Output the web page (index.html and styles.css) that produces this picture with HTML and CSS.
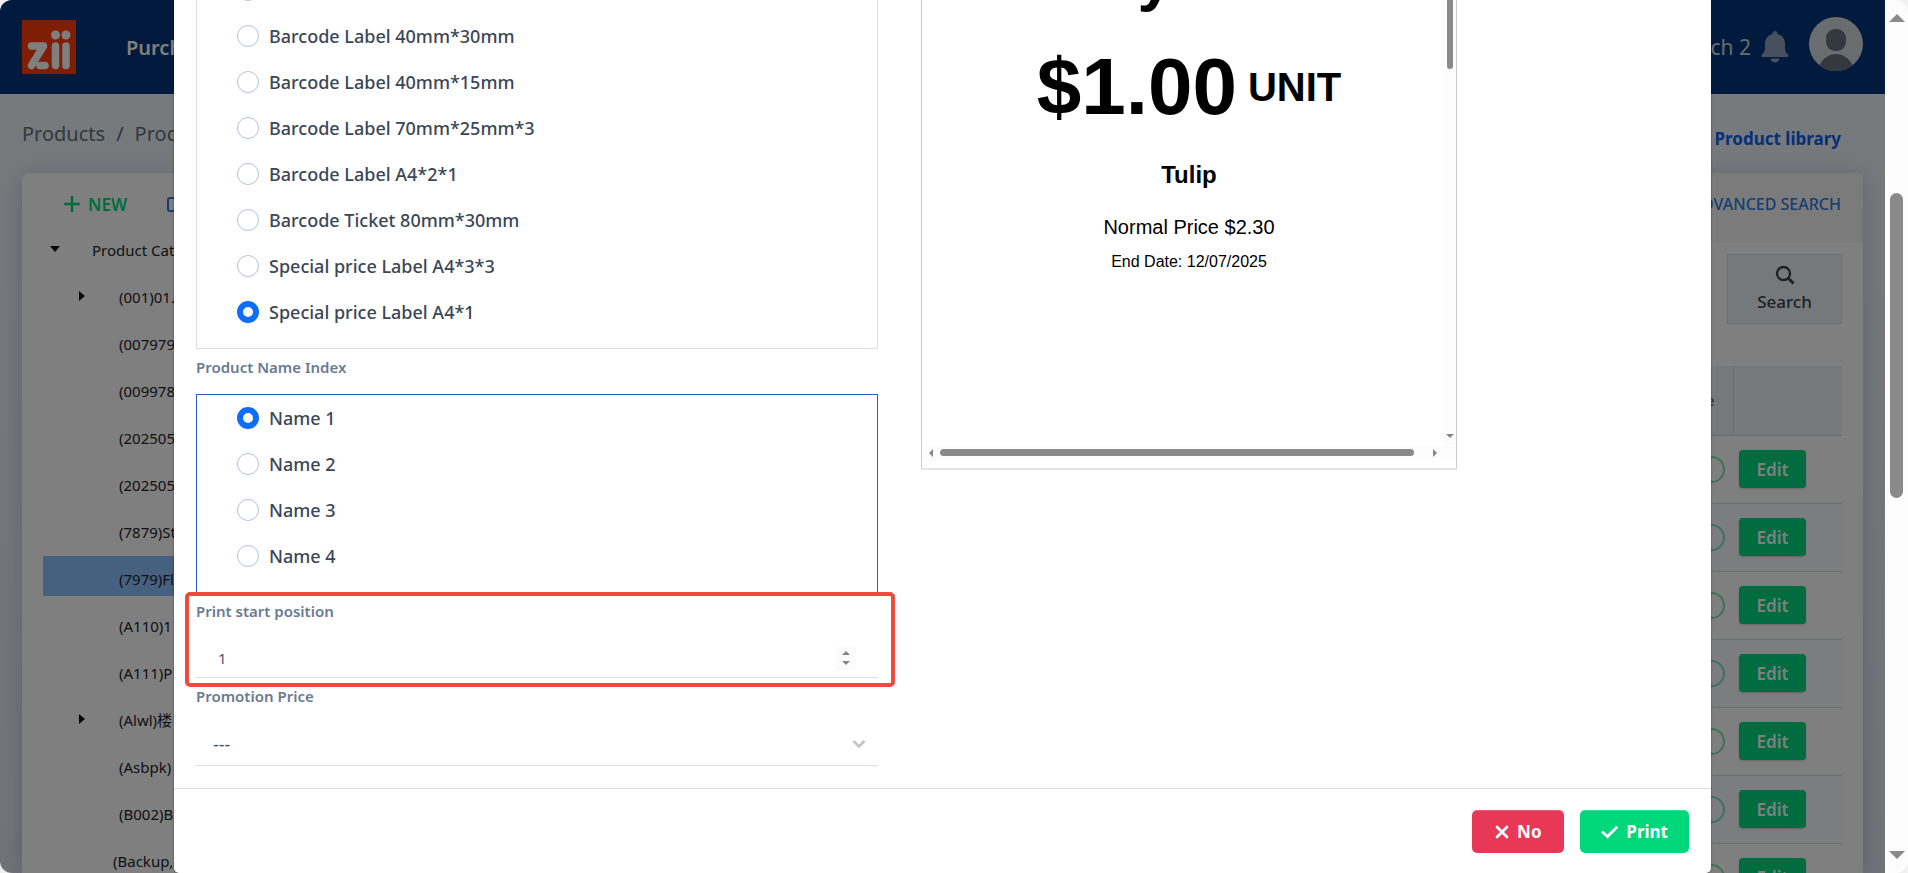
FILE: index.html
```html
<!DOCTYPE html>
<html lang="en">
<head>
  <meta charset="UTF-8" />
  <meta name="viewport" content="width=device-width, initial-scale=1.0" />
  <title>Products</title>
  <link rel="stylesheet" href="styles.css">
</head>
<body>
<div class="window">
  <div class="page">

    <!-- Top bar -->
    <header class="topbar">
      <svg class="logo" viewBox="0 0 54 54" role="img" aria-label="zii">
        <rect width="54" height="54" fill="#ff3c04"/>
        <g fill="none" stroke="#fff" stroke-width="7.500" stroke-linecap="round" stroke-linejoin="round">
          <path d="M9.500 26H21.500L9.500 45.500"/>
          <path d="M18 45.500H23"/>
          <path d="M33.500 26V45.500"/>
          <path d="M44 26V45.500"/>
        </g>
        <circle cx="33.500" cy="15" r="4.500" fill="#fff"/>
        <circle cx="44" cy="15" r="4.500" fill="#fff"/>
      </svg>
      <nav class="topnav"><a href="#">Purchase</a></nav>
      <span class="branch">Branch 2</span>
      <svg class="bell" viewBox="0 0 28 32" aria-hidden="true">
        <path fill="#8fa0b8" d="M14 0a2.500 2.500 0 0 0-2.400 3C7 4 4 8 4 12.500V17c0 3-1 4.500-2.800 6.200C-.3 24.800.3 26 2 26h24c1.700 0 2.300-1.200.8-2.800C25 21.500 24 20 24 17v-4.500C24 8 21 4 16.400 3A2.500 2.500 0 0 0 14 0z"/>
        <path fill="#8fa0b8" d="M9.500 27.500h9a4.500 4 0 0 1-9 0z"/>
      </svg>
      <svg class="avatar" viewBox="0 0 54 54" aria-hidden="true">
        <circle cx="27" cy="27" r="27" fill="#d3dbdf"/>
        <rect x="17" y="12" width="20" height="22" rx="9" fill="#67727f"/>
        <path d="M10.500 48.500C14 41 20 37 27 37s13 4 16.500 11.500A27 27 0 0 1 10.500 48.500z" fill="#67727f"/>
      </svg>
    </header>

    <div class="subbar">
      <div class="breadcrumb"><a href="#">Products</a><span>/</span><a href="#">Product</a></div>
      <a class="library" href="#">Product library</a>
    </div>

    <main class="card">
      <section class="tree">
        <div class="tree-tools">
          <button class="tool-new" type="button">
            <svg viewBox="0 0 16 16" aria-hidden="true"><path d="M8 1v14M1 8h14" stroke="currentColor" stroke-width="2.400" stroke-linecap="round"/></svg>
            NEW
          </button>
          <button class="tool-edit" type="button" aria-label="Edit category">
            <svg viewBox="0 0 16 16" aria-hidden="true"><rect x="1" y="2" width="13" height="13" rx="2" fill="none" stroke="currentColor" stroke-width="2"/></svg>
          </button>
        </div>
        <ul class="tree-list">
          <li class="root open">Product Category</li>
          <li class="closed">(001)01.</li>
          <li>(007979)</li>
          <li>(009978)</li>
          <li>(202505)</li>
          <li>(202505)</li>
          <li>(7879)St</li>
          <li class="active">(7979)Fl</li>
          <li>(A110)1</li>
          <li>(A111)P</li>
          <li class="closed">(Alwl)楼</li>
          <li>(Asbpk)</li>
          <li>(B002)B</li>
          <li class="outer">(Backup,</li>
        </ul>
      </section>

      <section class="list">
        <div class="list-head"><a href="#">ADVANCED SEARCH</a></div>
        <div class="list-body">
          <button class="search" type="button">
            <svg viewBox="0 0 20 20" aria-hidden="true"><circle cx="8.500" cy="8.500" r="6.500" fill="none" stroke="currentColor" stroke-width="2.400"/><path d="M13.500 13.500L18.500 18.500" stroke="currentColor" stroke-width="3"/></svg>
            Search
          </button>
          <table class="grid">
            <thead>
              <tr><th>Enable</th><th class="actions"></th></tr>
            </thead>
            <tbody>
              <tr><td><span class="switch"></span></td><td><button class="edit" type="button">Edit</button></td></tr>
              <tr><td><span class="switch"></span></td><td><button class="edit" type="button">Edit</button></td></tr>
              <tr><td><span class="switch"></span></td><td><button class="edit" type="button">Edit</button></td></tr>
              <tr><td><span class="switch"></span></td><td><button class="edit" type="button">Edit</button></td></tr>
              <tr><td><span class="switch"></span></td><td><button class="edit" type="button">Edit</button></td></tr>
              <tr><td><span class="switch"></span></td><td><button class="edit" type="button">Edit</button></td></tr>
              <tr><td><span class="switch"></span></td><td><button class="edit" type="button">Edit</button></td></tr>
            </tbody>
          </table>
        </div>
      </section>
    </main>

    <!-- Print dialog -->
    <div class="backdrop">
      <form class="modal">
        <div class="modal-body">
          <div class="fields">
            <div class="options" role="radiogroup" aria-label="Label format">
              <label><input type="radio" name="format">Barcode Label</label>
              <label><input type="radio" name="format">Barcode Label 30mm*20mm</label>
              <label><input type="radio" name="format">Barcode Label 40mm*30mm</label>
              <label><input type="radio" name="format">Barcode Label 40mm*15mm</label>
              <label><input type="radio" name="format">Barcode Label 70mm*25mm*3</label>
              <label><input type="radio" name="format">Barcode Label A4*2*1</label>
              <label><input type="radio" name="format">Barcode Ticket 80mm*30mm</label>
              <label><input type="radio" name="format">Special price Label A4*3*3</label>
              <label><input type="radio" name="format" checked>Special price Label A4*1</label>
            </div>

            <div class="caption" id="name-index">Product Name Index</div>
            <div class="options focused" role="radiogroup" aria-labelledby="name-index">
              <label><input type="radio" name="name" checked>Name 1</label>
              <label><input type="radio" name="name">Name 2</label>
              <label><input type="radio" name="name">Name 3</label>
              <label><input type="radio" name="name">Name 4</label>
            </div>

            <div class="field marked">
              <label class="caption" for="start">Print start position</label>
              <div class="control">
                <input id="start" type="number" value="1">
                <svg class="spin" viewBox="0 0 20 24" aria-hidden="true"><rect width="20" height="24" fill="#fbfbfb"/><path d="M6 9l4-4 4 4zM6 15l4 4 4-4z" fill="#858585"/></svg>
              </div>
            </div>

            <div class="field">
              <label class="caption" for="promo">Promotion Price</label>
              <div class="control">
                <select id="promo"><option>---</option></select>
                <svg class="chevron" viewBox="0 0 14 10" aria-hidden="true"><path d="M1.500 2L7 7.500L12.500 2" fill="none" stroke="#c0c2ce" stroke-width="2.600"/></svg>
              </div>
            </div>
          </div>

          <div class="preview">
            <div class="sheet">
              <div class="headline">Buy Now</div>
              <div class="price"><span>$1.00</span><small>UNIT</small></div>
              <div class="product">Tulip</div>
              <div class="normal">Normal Price $2.30</div>
              <div class="until">End Date: 12/07/2025</div>
            </div>
            <div class="vbar">
              <i></i>
              <svg viewBox="0 0 8 6" aria-hidden="true"><path d="M0 1h8L4 5z" fill="#858585"/></svg>
            </div>
            <div class="hbar">
              <svg viewBox="0 0 6 8" aria-hidden="true"><path d="M5 0v8L1 4z" fill="#858585"/></svg>
              <i></i>
              <svg viewBox="0 0 6 8" aria-hidden="true"><path d="M1 0v8l4-4z" fill="#858585"/></svg>
            </div>
          </div>
        </div>

        <div class="modal-foot">
          <button class="btn btn-no" type="button">
            <svg viewBox="0 0 14 14" aria-hidden="true"><path d="M2 2l10 10M12 2L2 12" stroke="#fff" stroke-width="2.800" stroke-linecap="round"/></svg>
            No
          </button>
          <button class="btn btn-print" type="button">
            <svg class="tick" viewBox="0 0 17 14" aria-hidden="true"><path d="M2 7.500L6.500 11.500L15.500 2.500" fill="none" stroke="#fff" stroke-width="2.800" stroke-linecap="round"/></svg>
            Print
          </button>
        </div>
      </form>
    </div>
  </div>

  <!-- Window scrollbar -->
  <div class="scrollbar" aria-hidden="true">
    <svg viewBox="0 0 16 8"><path d="M0 8L8 0l8 8z" fill="#8a8a8a"/></svg>
    <div class="rail"><i></i></div>
    <svg viewBox="0 0 16 8"><path d="M0 0h16L8 8z" fill="#8a8a8a"/></svg>
  </div>
</div>
</body>
</html>
```

FILE: styles.css
```css
* { margin: 0; padding: 0; box-sizing: border-box; }

body {
  font-family: "Noto Sans", "Noto Sans CJK SC", sans-serif;
  font-size: 16px;
  color: #212529;
  background: #f0f0f0;
}

a { color: inherit; text-decoration: none; }
button { font: inherit; border: none; background: none; cursor: pointer; }
svg { display: block; flex: none; }

.window {
  display: flex;
  height: 100vh;
  border-radius: 12px;
  overflow: hidden;
  background: #fcfcfc;
}

.page {
  position: relative;
  flex: 1;
  min-width: 0;
  display: flex;
  flex-direction: column;
  overflow: hidden;
  background: linear-gradient(#eef6fb, #e6e8f2);
}

/* top bar */
.topbar {
  flex: none;
  display: flex;
  align-items: center;
  height: 94px;
  padding: 0 22px;
  background: #04347a;
  color: #fff;
  font-size: 21px;
}

.logo { width: 54px; height: 54px; }
.topnav { flex: 1; padding-left: 50px; font-size: 20px; font-weight: 600; }
.branch { color: #d0d8e4; }
.bell { width: 28px; height: 32px; margin: 0 20px 0 10px; }
.avatar { width: 54px; height: 54px; margin-bottom: 6px; }

/* breadcrumb */
.subbar {
  flex: none;
  display: flex;
  align-items: center;
  justify-content: space-between;
  height: 79px;
  padding: 0 44px 0 22px;
  color: #66707f;
}

.breadcrumb { display: flex; gap: 11px; font-size: 20px; }
.library { color: #0a5ff0; font-size: 17px; font-weight: 700; padding-top: 10px; }

/* content card */
.card {
  flex: 1;
  display: flex;
  align-items: stretch;
  min-height: 0;
  margin: 0 22px;
  border-radius: 8px 8px 0 0;
  background: #fff;
  box-shadow: 0 4px 22px rgba(60, 70, 110, 0.25);
}

.tree { width: 400px; padding: 0 21px; }
.tree-tools {
  display: flex;
  align-items: center;
  gap: 40px;
  height: 54px;
  padding: 8px 0 0 21px;
  font-size: 17px;
  font-weight: 600;
}
.tree-tools button { display: flex; align-items: center; gap: 8px; }
.tree-tools svg { width: 16px; height: 16px; }
.tool-new { color: #00d97e; }
.tool-edit { color: #2c7be5; }

.tree-list { list-style: none; font-size: 15px; }
.tree-list li {
  position: relative;
  height: 40px;
  margin-bottom: 7px;
  padding: 8px 0 0 76px;
  line-height: 30px;
  white-space: nowrap;
}
.tree-list .root { padding-left: 49px; }
.tree-list .outer { padding-left: 70px; }
.tree-list .active { background: #8ac2fe; }
.tree-list .open::before,
.tree-list .closed::before {
  content: "";
  position: absolute;
  top: 19px;
  left: 7px;
  border: 5px solid transparent;
  border-top: 6px solid #111;
  border-bottom: 0;
}
.tree-list .closed::before {
  top: 17px;
  left: 36px;
  border: 5px solid transparent;
  border-left: 6px solid #111;
  border-right: 0;
}

.list { flex: 1; }
.list-head {
  display: flex;
  align-items: center;
  justify-content: flex-end;
  height: 70px;
  padding: 0 22px 8px;
  border-top-right-radius: 8px;
  background: #f6f6f6;
  color: #2c7be5;
  font-size: 16px;
  font-weight: 500;
}
.list-body { display: flex; flex-direction: column; gap: 42px; padding: 11px 21px 0; }

.search {
  align-self: flex-end;
  display: flex;
  flex-direction: column;
  align-items: center;
  justify-content: center;
  gap: 5px;
  width: 115px;
  height: 70px;
  border: 1px solid #d6e0ea;
  background: #edf2f9;
  color: #3a444e;
  font-size: 17px;
  font-weight: 500;
}
.search svg { width: 20px; height: 20px; }

.grid { width: 100%; border-collapse: collapse; }
.grid th, .grid td { height: 68px; border-bottom: 1px solid #d2ddec; }
.grid th {
  height: 69px;
  padding-right: 18px;
  background: #edf2f9;
  color: #5a6878;
  font-size: 14px;
  font-weight: 500;
  text-align: right;
}
.grid th.actions { width: 109px; border-left: 1px solid #d2ddec; }
.grid td:first-child { padding-right: 8px; }
.grid td:last-child { padding-left: 6px; }
.grid tbody tr:nth-child(even) { background: #f9fbfd; }

.switch {
  display: block;
  width: 54px;
  height: 27px;
  margin-left: auto;
  border: 2px solid #7fe0b8;
  border-radius: 14px;
}

.edit {
  display: block;
  width: 67px;
  height: 38px;
  border-radius: 4px;
  background: #00d97e;
  box-shadow: 0 1px 2px rgba(0, 0, 0, 0.2);
  color: #fff;
  font-size: 17px;
  font-weight: 600;
}

/* dialog */
.backdrop {
  position: absolute;
  inset: 0;
  display: flex;
  align-items: flex-end;
  padding: 0 174px;
  background: rgba(0, 0, 0, 0.5);
  overflow: hidden;
}

.modal {
  flex: 1;
  border-radius: 5px;
  background: #fff;
  box-shadow: 0 0 2px rgba(0, 0, 0, 0.6);
}

.modal-body {
  display: grid;
  grid-template-columns: 682fr 536fr 189fr;
  column-gap: 43px;
  align-items: start;
  padding: 22px;
}

.options { padding-bottom: 13px; border: 1px solid #d6e0ee; }
.options.focused { border-color: #2062b8; }
.options label {
  display: flex;
  align-items: center;
  gap: 10px;
  height: 46px;
  padding-left: 40px;
  color: #3b4656;
  font-size: 18px;
  font-weight: 500;
}
.options input {
  appearance: none;
  width: 22px;
  height: 22px;
  border: 1px solid #b6c1d6;
  border-radius: 50%;
  background: #fff;
}
.options input:checked { border: 6px solid #0d6efd; }

.caption {
  display: block;
  height: 45px;
  color: #6a7a90;
  font-size: 15px;
  font-weight: 600;
  line-height: 37px;
}

.field { position: relative; }
.marked::after {
  content: "";
  position: absolute;
  inset: -1px -17px -9px -11px;
  border: 4px solid #f24a3f;
  border-radius: 5px;
  pointer-events: none;
}

.control {
  display: flex;
  align-items: center;
  height: 43px;
  padding-right: 12px;
  border-bottom: 1px solid #d6e0ee;
}
.marked .control { height: 40px; padding-right: 22px; }
.control input,
.control select {
  appearance: none;
  flex: 1;
  min-width: 0;
  border: none;
  outline: none;
  background: none;
  color: #4a5566;
  font: inherit;
}
.control input { padding-left: 22px; font-size: 15px; }
.control input::-webkit-inner-spin-button { appearance: none; }
.control select { padding-left: 17px; font-size: 18px; }
.spin { width: 20px; height: 24px; }
.chevron { width: 14px; height: 10px; }

/* label preview */
.preview {
  position: relative;
  height: 550px;
  border: 1px solid #ccc;
  border-bottom: 2px solid #e4e4e4;
  overflow: hidden;
  color: #000;
  font-family: "Liberation Sans", Arial, sans-serif;
  text-align: center;
}

.headline { font-size: 64px; font-weight: 700; line-height: 112px; }
.price {
  display: flex;
  align-items: center;
  justify-content: center;
  gap: 11px;
  height: 108px;
  font-size: 80px;
  font-weight: 700;
}
.price small { font-size: 40px; }
.product { font-size: 24px; font-weight: 700; line-height: 68px; }
.normal { font-size: 20px; line-height: 36px; }
.until { font-size: 16px; line-height: 34px; }

.vbar {
  position: absolute;
  top: 0;
  right: 0;
  bottom: 23px;
  width: 12px;
  display: flex;
  flex-direction: column;
  align-items: center;
  justify-content: space-between;
  padding-bottom: 6px;
  background: #fcfcfc;
}
.vbar i { width: 6px; height: 148px; border-radius: 3px; background: #8a8a8a; }
.vbar svg { width: 8px; height: 6px; }

.hbar {
  position: absolute;
  left: 0;
  right: 0;
  bottom: 9px;
  height: 13px;
  display: flex;
  align-items: center;
  gap: 6px;
  padding: 0 18px 0 6px;
  background: #fcfcfc;
}
.hbar i { flex: 1; height: 7px; margin-right: 12px; border-radius: 4px; background: #8a8a8a; }
.hbar svg { width: 6px; height: 8px; }

.modal-foot {
  display: flex;
  justify-content: flex-end;
  gap: 16px;
  padding: 21px 22px 20px;
  border-top: 1px solid #d6e0ee;
}

.btn {
  display: flex;
  align-items: center;
  justify-content: center;
  gap: 8px;
  min-width: 92px;
  height: 43px;
  padding: 0 21px;
  border-radius: 5px;
  box-shadow: inset 0 1px 0 rgba(255, 255, 255, 0.2);
  color: #fff;
  font-size: 17px;
  font-weight: 700;
}
.btn svg { width: 14px; height: 14px; }
.btn .tick { width: 17px; }
.btn-no { background: #e83757; }
.btn-print { background: #00d67c; }

/* window scrollbar */
.scrollbar {
  flex: none;
  display: flex;
  flex-direction: column;
  align-items: center;
  gap: 12px;
  width: 23px;
  padding: 14px 0;
}
.scrollbar svg { width: 16px; height: 8px; }
.rail { flex: 1; padding-top: 159px; }
.rail i { display: block; width: 13px; height: 305px; border-radius: 7px; background: #8a8a8a; }
```
